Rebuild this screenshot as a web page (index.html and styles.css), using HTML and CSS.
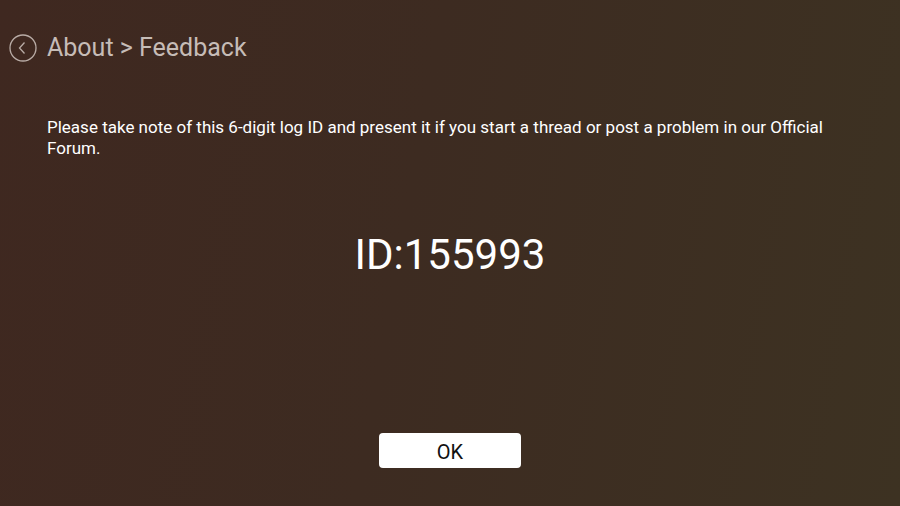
FILE: index.html
```html
<!DOCTYPE html>
<html lang="en">
<head>
    <meta charset="UTF-8">
    <meta name="viewport" content="width=device-width, initial-scale=1.0">
    <title>Feedback</title>
    <link rel="stylesheet" href="styles.css">
</head>
<body>
    <div class="screen">
        <div class="header">
            <svg class="back-icon" width="28" height="28" viewBox="0 0 28 28">
                <circle cx="14" cy="14" r="13" fill="none" stroke="#b9aca6" stroke-width="1.3"/>
                <path d="M15.5 8.5 L10.5 14 L15.5 19.5" fill="none" stroke="#b9aca6" stroke-width="1.3"/>
            </svg>
            <h1>About &gt; Feedback</h1>
        </div>
        <p class="note">Please take note of this 6-digit log ID and present it if you start a thread or post a problem in our Official Forum.</p>
        <div class="log-id">ID:155993</div>
        <div class="actions">
            <button class="ok-button">OK</button>
        </div>
    </div>
</body>
</html>
```

FILE: styles.css
```css
html, body {
    margin: 0;
    height: 100%;
}
body {
    font-family: Roboto, "Noto Sans", sans-serif;
    background: #3c2a21;
}
.screen {
    height: 506px;
    box-sizing: border-box;
    display: flex;
    flex-direction: column;
    background: linear-gradient(100deg, #3f2820 0%, #3d2b21 45%, #3d3222 100%);
}
.header {
    display: flex;
    align-items: center;
    gap: 10px;
    padding: 34px 0 0 9px;
}
.back-icon {
    flex: none;
}
h1 {
    margin: 0;
    font-size: 25px;
    font-weight: 400;
    color: #c6bcb7;
    line-height: 28px;
}
.note {
    margin: 55px 47px 0;
    font-size: 17px;
    line-height: 21px;
    color: #ffffff;
}
.log-id {
    margin-top: 71px;
    text-align: center;
    font-size: 42px;
    line-height: 50px;
    color: #ffffff;
}
.actions {
    display: flex;
    justify-content: center;
    margin-top: 153px;
}
.ok-button {
    width: 142px;
    height: 35px;
    border: none;
    border-radius: 4px;
    background: #ffffff;
    color: #111;
    font-family: Roboto, "Noto Sans", sans-serif;
    font-size: 20px;
    padding: 2px 0 0;
}
```
